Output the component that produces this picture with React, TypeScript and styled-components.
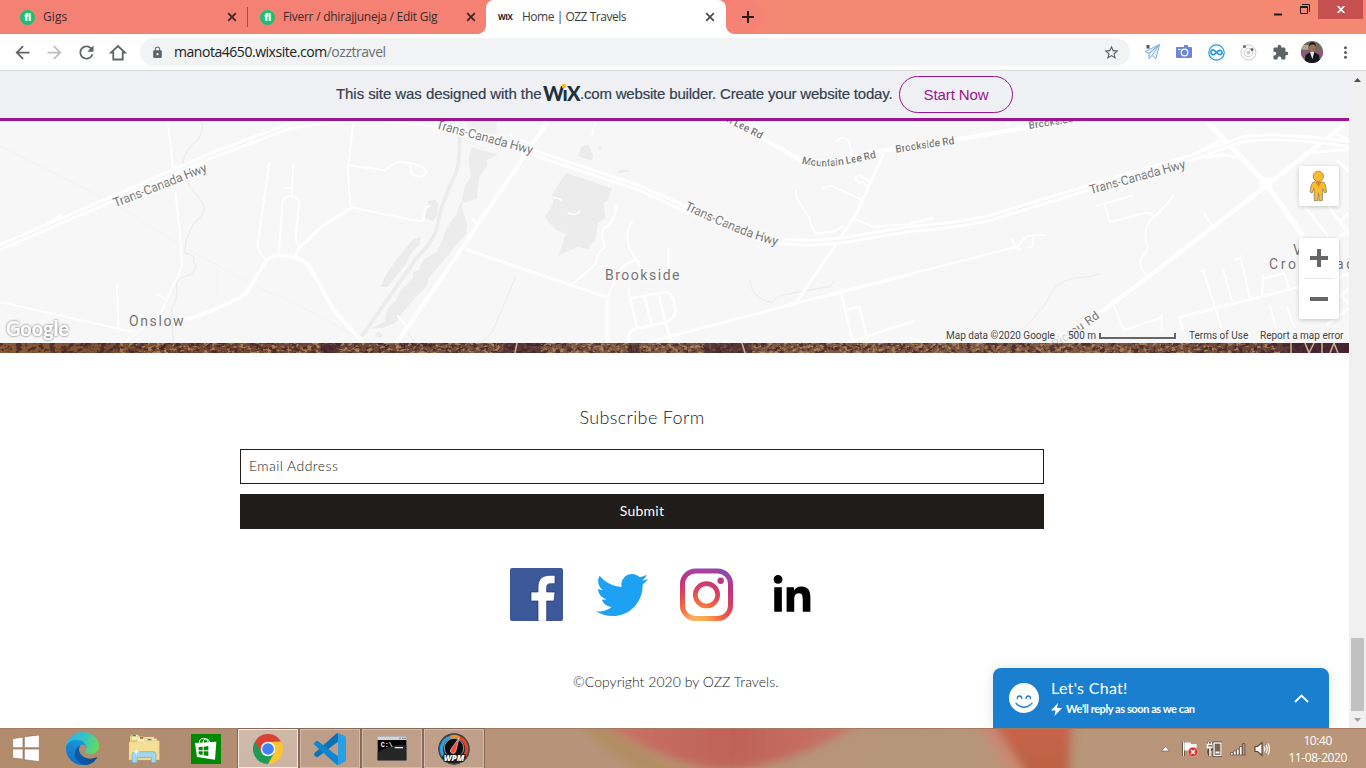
import React from 'react';
import styled, { createGlobalStyle } from 'styled-components';
import {
  MdArrowBack,
  MdArrowForward,
  MdRefresh,
  MdLock,
  MdStarBorder,
  MdExtension,
  MdMoreVert,
} from 'react-icons/md';
import { FaTwitter, FaLinkedinIn } from 'react-icons/fa';

const GlobalStyle = createGlobalStyle`
  * { box-sizing: border-box; }
  body { margin: 0; overflow: hidden; background: #fff; }
  svg { display: block; flex: none; }
`;

const UI_FONT = `'Open Sans', 'Noto Sans', sans-serif`;
const SITE_FONT = `Lato, 'Open Sans', sans-serif`;

const Screen = styled.div`
  width: 1366px;
  height: 768px;
  display: flex;
  flex-direction: column;
  overflow: hidden;
  font-family: ${UI_FONT};
`;

/* ---------- Tab strip ---------- */

const TabStrip = styled.header`
  display: flex;
  height: 34px;
  flex: none;
  padding-left: 8px;
  background: linear-gradient(90deg, #f58174 0, #f58274 740px, #f48873 780px, #f48873 100%);
`;

const Tab = styled.div<{ $width: number; $active?: boolean }>`
  position: relative;
  display: flex;
  align-items: center;
  width: ${(p) => p.$width}px;
  height: 34px;
  padding: 0 ${(p) => (p.$active ? 11 : 10)}px 0 12px;
  border-radius: 8px 8px 0 0;
  background: ${(p) => (p.$active ? '#fff' : 'transparent')};
  color: ${(p) => (p.$active ? '#3c4043' : '#3b2a2b')};

  &::before,
  &::after {
    content: '';
    display: ${(p) => (p.$active ? 'block' : 'none')};
    position: absolute;
    bottom: 0;
    width: 8px;
    height: 8px;
  }
  &::before {
    left: -8px;
    background: radial-gradient(circle at 0 0, transparent 7.5px, #fff 8px);
  }
  &::after {
    right: -8px;
    background: radial-gradient(circle at 100% 0, transparent 7.5px, #fff 8px);
  }
`;

const TabTitle = styled.span<{ $spacing?: number }>`
  flex: 1;
  margin-left: 8px;
  font-size: 12px;
  line-height: 16px;
  letter-spacing: ${(p) => p.$spacing ?? 0}px;
  white-space: nowrap;
`;

const TabDivider = styled.div`
  width: 1px;
  height: 20px;
  margin: 7px 0 0;
  background: #9b4f4a;
`;

const FiverrBadge = styled.span`
  width: 15px;
  height: 15px;
  border-radius: 50%;
  background: #1dbf73;
  color: #fff;
  font: 800 10px/14px 'Open Sans', sans-serif;
  letter-spacing: -0.4px;
  text-align: center;
`;

const WixBadge = styled.span`
  width: 16px;
  color: #222;
  font: 700 8px/14px 'Open Sans', sans-serif;
  letter-spacing: -0.5px;
`;

const NewTab = styled.div`
  display: grid;
  place-items: center;
  width: 28px;
  height: 28px;
  margin: 3px 0 0 8px;
  border-radius: 50%;
  background: #f58274;
`;

const WindowControls = styled.div`
  display: flex;
  margin-left: auto;
  margin-right: 3px;
  height: 19px;
`;

const ControlButton = styled.div<{ $width: number; $danger?: boolean }>`
  display: grid;
  place-items: center;
  width: ${(p) => p.$width}px;
  background: ${(p) => (p.$danger ? '#c75050' : 'transparent')};
`;

/* ---------- Toolbar ---------- */

const Toolbar = styled.nav`
  display: flex;
  align-items: center;
  height: 37px;
  flex: none;
  padding: 0 4px 0 6px;
  border-bottom: 1px solid #d6d8db;
  background: #fff;
`;

const ToolIcon = styled.div<{ $color?: string; $width?: number }>`
  display: grid;
  place-items: center;
  width: ${(p) => p.$width ?? 32}px;
  flex: none;
  color: ${(p) => p.$color ?? '#5f6368'};
`;

const Omnibox = styled.div`
  display: flex;
  align-items: center;
  flex: 1;
  height: 28px;
  margin: 0 6px;
  padding: 0 10px 0 11px;
  border-radius: 14px;
  background: #f1f3f4;
  color: #5f6368;
`;

const Url = styled.span`
  flex: 1;
  margin-left: 10px;
  font-size: 14px;
  line-height: 20px;
  letter-spacing: -0.46px;
  color: #6b6f74;
  b {
    font-weight: 400;
    color: #202124;
  }
`;

/* ---------- Page ---------- */

const Viewport = styled.div`
  display: flex;
  height: 657px;
  flex: none;
`;

const Page = styled.main`
  position: relative;
  display: flex;
  flex-direction: column;
  width: 1349px;
  height: 657px;
  overflow: hidden;
  background: #fff;
`;

const WixBanner = styled.div`
  display: flex;
  align-items: center;
  height: 50px;
  flex: none;
  padding-left: 336px;
  border-bottom: 3px solid #9a148e;
  background: #eff0f3;
  color: #32414f;
  font: 400 15px/20px 'Liberation Sans', Arial, sans-serif;
  white-space: nowrap;
`;

const BannerText = styled.span<{ $width: number; $spacing: number }>`
  width: ${(p) => p.$width}px;
  padding-bottom: 2px;
  letter-spacing: ${(p) => p.$spacing}px;
  -webkit-text-stroke: 0.2px #32414f;
`;

const WixLogo = styled.span`
  position: relative;
  width: 37px;
  margin-bottom: 3px;
  color: #20303c;
  font: 900 20px/20px Lato, sans-serif;
  letter-spacing: -0.7px;
  &::after {
    content: '';
    position: absolute;
    left: 19px;
    top: 1px;
    width: 4px;
    height: 4px;
    border-radius: 1px;
    background: #fbbd15;
  }
`;

const StartButton = styled.button`
  width: 114px;
  height: 37px;
  margin-left: 7px;
  padding: 0;
  border: 1px solid #9a148e;
  border-radius: 19px;
  background: transparent;
  color: #9a148e;
  font: 400 15px/20px 'Liberation Sans', Arial, sans-serif;
  letter-spacing: -0.1px;
`;

const MapPanel = styled.section`
  position: relative;
  height: 222px;
  flex: none;
  background: #f7f7f7;
`;

const MapControl = styled.div<{ $top: number; $height: number }>`
  position: absolute;
  right: 10px;
  top: ${(p) => p.$top}px;
  display: flex;
  flex-direction: column;
  align-items: center;
  width: 40px;
  height: ${(p) => p.$height}px;
  border-radius: 2px;
  background: #fff;
  box-shadow: 0 1px 4px rgba(0, 0, 0, 0.2);
`;

const ZoomButton = styled.div`
  display: grid;
  place-items: center;
  width: 40px;
  height: 40px;
`;

const ZoomDivider = styled.div`
  width: 30px;
  height: 1px;
  background: #e6e6e6;
`;

const MapCredits = styled.div`
  position: absolute;
  right: 0;
  bottom: 0;
  display: flex;
  align-items: center;
  height: 14px;
  color: #444;
  font: 400 10px/14px Roboto, sans-serif;
  white-space: nowrap;
`;

const Credit = styled.span<{ $width: number; $spacing?: number }>`
  width: ${(p) => p.$width}px;
  padding-left: 6px;
  letter-spacing: ${(p) => p.$spacing ?? 0}px;
  background: rgba(247, 247, 247, 0.7);
`;

const ScaleBar = styled.i`
  display: block;
  width: 77px;
  height: 6px;
  margin-right: 7px;
  border: solid #666;
  border-width: 0 2px 2px;
`;

const PhotoStrip = styled.div`
  height: 10px;
  flex: none;
`;

const Footer = styled.footer`
  display: flex;
  flex-direction: column;
  font-family: ${SITE_FONT};
  color: #201c1a;
`;

const SubscribeForm = styled.form`
  display: flex;
  flex-direction: column;
  width: 804px;
  margin: 51px 0 0 240px;
`;

const FormTitle = styled.h2`
  margin: 0 0 19px;
  text-align: center;
  font-size: 18px;
  line-height: 26px;
  font-weight: 300;
  letter-spacing: 0.35px;
`;

const EmailField = styled.label`
  height: 35px;
  padding: 0 8px;
  border: 1px solid #201c1a;
  font-size: 14px;
  font-weight: 300;
  line-height: 31px;
  letter-spacing: 0.44px;
`;

const SubmitButton = styled.button`
  height: 35px;
  margin-top: 10px;
  padding: 0 0 2px;
  border: 0;
  background: #201c1a;
  color: #fff;
  font: 400 14px/33px ${SITE_FONT};
  letter-spacing: 0.25px;
`;

const SocialBar = styled.div`
  display: flex;
  gap: 32px;
  margin: 39px 0 0 510px;
`;

const SocialLink = styled.span<{ $color?: string; $drop?: number }>`
  display: grid;
  place-items: center;
  width: 53px;
  height: 53px;
  padding-top: ${(p) => p.$drop ?? 0}px;
  color: ${(p) => p.$color ?? '#000'};
`;

const Copyright = styled.p`
  margin: 51px 0 0 573px;
  font-size: 14px;
  line-height: 20px;
  font-weight: 300;
  letter-spacing: 0.03px;
`;

const ChatWidget = styled.aside`
  position: absolute;
  right: 20px;
  bottom: 0;
  display: flex;
  align-items: center;
  width: 336px;
  height: 60px;
  padding: 0 20px 0 16px;
  border-radius: 8px 8px 0 0;
  background: #1b7fd0;
  box-shadow: 0 0 12px rgba(0, 60, 60, 0.13);
  color: #fff;
  font-family: ${SITE_FONT};
`;

const ChatCopy = styled.div`
  display: flex;
  flex-direction: column;
  flex: 1;
  margin-left: 12px;
`;

const ChatTitle = styled.strong`
  font-size: 16px;
  line-height: 22px;
  font-weight: 400;
  letter-spacing: 0.3px;
`;

const ChatNote = styled.span`
  display: flex;
  align-items: center;
  gap: 4px;
  font-size: 11px;
  line-height: 20px;
  font-weight: 700;
  letter-spacing: -0.42px;
`;

const ScrollTrack = styled.div`
  display: flex;
  flex-direction: column;
  align-items: center;
  width: 17px;
  background: #f0f0f1;
`;

const ScrollArrow = styled.div`
  display: grid;
  place-items: center;
  width: 17px;
  height: 17px;
`;

const ScrollThumb = styled.div`
  width: 13px;
  height: 73px;
  margin-top: auto;
  background: #c1c1c1;
`;

/* ---------- Taskbar ---------- */

const Taskbar = styled.footer`
  position: relative;
  display: flex;
  height: 40px;
  flex: none;
  border-top: 1px solid #a5795f;
  background: linear-gradient(90deg, #b08c6c 0, #b18e75 300px, #b79379 480px, #b69678 900px, #ba9579 1366px);
`;

const Wallpaper = styled.svg`
  position: absolute;
  inset: 0;
`;

const TaskItem = styled.div<{ $state?: 'open' | 'active'; $width?: number }>`
  position: relative;
  display: grid;
  place-items: center;
  width: ${(p) => p.$width ?? 60}px;
  height: 39px;
  margin: 0 1px;
  border: ${(p) => (p.$state ? '1px solid' : '0 solid')};
  border-color: ${(p) => (p.$state === 'active' ? '#f3ebe4' : '#d3bbaa')};
  outline: ${(p) => (p.$state ? '1px solid #87695a' : 'none')};
  outline-offset: 0;
  background: ${(p) =>
    p.$state === 'active'
      ? 'linear-gradient(150deg, #d0bba9, #cbb3a4)'
      : p.$state === 'open'
        ? 'rgba(205, 178, 160, 0.45)'
        : 'transparent'};
`;

const Tray = styled.div`
  position: relative;
  display: flex;
  align-items: center;
  gap: 8px;
  margin-left: auto;
  padding-right: 19px;
`;

const TrayArrow = styled.svg`
  margin-right: 4px;
`;

const Clock = styled.div`
  margin-left: 10px;
  color: #fff;
  font-size: 12px;
  line-height: 17px;
  letter-spacing: -0.4px;
  text-align: center;
`;

/* ---------- Drawings ---------- */

const CloseGlyph = ({ color = '#3a2526' }: { color?: string }) => (
  <svg width="10" height="10" viewBox="0 0 10 10" stroke={color} strokeWidth="1.7">
    <path d="M1.2 1.2l7.6 7.6M8.8 1.2L1.2 8.8" />
  </svg>
);

const halo = { stroke: '#fbfbfb', strokeWidth: 9, paintOrder: 'stroke' as const, strokeLinejoin: 'round' as const };

const MapDrawing = () => (
  <svg width="1349" height="222" viewBox="0 121 1349 222" fontFamily="Roboto, sans-serif" fill="none">
    <defs>
      <filter id="logoShadow" x="-20%" y="-40%" width="140%" height="180%">
        <feDropShadow dx="0" dy="0" stdDeviation="1.1" floodColor="#555" floodOpacity="1" />
      </filter>
      <path id="hwyCurve" d="M684 274Q740 300 800 325Q880 362 985 389" />
      <path id="leeCurve" d="M1037 136Q1090 152 1160 140Q1210 132 1275 116" />
      <path id="hwyTop" d="M1306 31L1640 121" />
    </defs>

    {/* wooded areas */}
    <g transform="translate(0 118) scale(.33333)" fill="#ececec">
      <path d="M1285 248l22-3 8 12-4 35-12 18-26-10 10-36z" />
      <path d="M1240 362l22-4-4 20-28 32-14 30-40 50-14 18-20-2 14-32 34-50z" />
      <path d="M1390 236L1368 290 1340 330 1326 370 1310 402 1270 425 1256 455 1238 465 1240 480 1200 520 1190 545 1160 575 1155 610 1112 632 1150 630 1185 615 1215 575 1240 545 1280 505 1286 480 1320 440 1368 382 1398 348 1402 318 1386 272z" />
      <path d="M1136 640l14 14-10 8-14-10z" />
      <path d="M1085 655L1250 420Q1290 380 1310 335Q1320 260 1368 165Q1385 110 1376 20" fill="none" stroke="#ececec" strokeWidth="11" />
    </g>
    <g transform="translate(456 118) scale(.33333)" fill="#ececec">
      <path d="M34 10h88v36l-50 4-24-6-14-14z" opacity=".7" />
      <path d="M46 88l30 8 50 14-34 16 2 16-24 34-8 66-36 12-8-8 8-40 18-30-6-50z" />
      <path d="M330 165l138 46-12 35-13 8 5 46-22 16-8 52-16 12-4 14-32-8-58 26 22-66-30-10-34-38 26-40-4-28z" />
      <path d="M378 84l20-4 6 14 8 22-6 12-40-14zM424 86l16-2-8 16zM488 158l32-3-4 8-30 2z" />
    </g>

    {/* streams and boundaries */}
    <g transform="translate(0 118) scale(.33333)" stroke="#e8e8e8" strokeWidth="3">
      <path d="M600 10Q612 20 604 40Q600 65 580 76Q548 110 549 142Q556 170 568 205Q596 235 604 250Q622 265 604 295Q572 320 568 345Q552 375 554 405Q590 410 580 430Q596 450 572 470Q528 480 530 500Q534 550 514 570L520 670" />
      <path d="M0 84L340 255L555 390L760 500Q950 585 1080 664M652 450v80" stroke="#f0f0f0" strokeWidth="2" />
      <path d="M1225 645l20 30" />
    </g>
    <g transform="translate(456 118) scale(.33333)" stroke="#ebebeb" strokeWidth="3">
      <path d="M180 474L110 640Q95 660 75 672M883 484Q880 540 948 554Q962 534 975 532Q1045 518 1120 506L1133 490" />
    </g>
    <g transform="translate(910 118) scale(.33333)" stroke="#ebebeb" strokeWidth="3">
      <path d="M568 466Q550 478 500 479Q450 485 425 520Q400 580 336 634" />
    </g>

    {/* local roads */}
    <g transform="translate(0 118) scale(.33333)" stroke="#fff" strokeWidth="6" strokeLinejoin="round">
      <path d="M504 10L540 350L546 435Q540 470 520 500L480 590L370 676M471 529l25 13M350 500l6 132M0 552L398 642" />
      <path d="M808 132L774 370Q768 395 797 427M880 136L875 234M850 210h25M836 410L848 250Q850 236 872 234Q896 236 897 256L887 355Q888 375 898 388" />
      <path d="M1060 10L1043 160L1052 268L1256 310Q1270 308 1272 298L1276 272L1290 262M1046 142L1156 157Q1176 135 1200 132Q1280 138 1278 166Q1260 185 1236 168L1230 140" />
      <path d="M1052 272L970 322L900 388L885 412" strokeWidth="10" />
      <path d="M550 606Q620 590 725 535Q745 522 755 500L797 430Q815 412 840 412Q900 410 930 448L1000 575L1090 676" strokeWidth="11" />
      <path d="M0 380L130 326Q165 305 185 288" strokeWidth="7" />
      <path d="M1192 592l26 30" />
    </g>
    <g transform="translate(456 118) scale(.33333)" stroke="#fff" strokeWidth="6" strokeLinejoin="round">
      <path d="M275 10L-15 440L-180 676" strokeWidth="12" />
      <path d="M30 394L453 538V676" strokeWidth="9" />
      <path d="M480 264Q480 310 445 330Q430 350 448 385Q430 400 422 420L420 435Q400 460 352 495M530 307Q500 350 525 400Q545 425 556 448M638 390v60M455 536L475 490Q490 440 540 425M520 503v38M408 52l10-42M160 50l72 33M50 300l12 20" />
      <path d="M290 238q20 0 26 10M335 285q30 10 38-10" strokeWidth="4" />
      <path d="M522 541L630 522Q655 525 658 580Q655 605 625 614L530 635Q515 645 518 676M522 541L543 630M565 535L586 620M607 528L645 676" strokeWidth="8" />
      <path d="M560 676L1020 556L1154 522L1368 468" strokeWidth="9" />
      <path d="M1282 108L1205 280L1140 380L1015 560" strokeWidth="9" />
      <path d="M1154 522L1192 676M1172 574L1210 568L1235 664M1172 676L1290 635L1368 612" strokeWidth="8" />
      <path d="M1098 212L1125 203L1215 244M1020 214v22L1060 300Q1070 345 1085 346L1130 342L1160 326M1190 300l60 26L1368 318M1142 70Q1160 50 1180 70L1188 110M1240 190l-25-15q-22-2-14 14q8 8 20 2l20 30" />
      <path d="M900 50L1040 130" strokeWidth="13" />
      <path d="M1220 106L1368 86" strokeWidth="12" />
    </g>
    <g transform="translate(910 118) scale(.33333)" stroke="#fff" strokeWidth="6" strokeLinejoin="round">
      <path d="M130 66L365 26" strokeWidth="13" />
      <path d="M890 10L1070 198L1180 356" strokeWidth="16" />
      <path d="M1316 10L1060 210L710 480L560 592" strokeWidth="13" />
      <circle cx="1068" cy="196" r="16" fill="#fff" strokeWidth="9" />
      <path d="M0 468L322 386L346 358Q360 348 408 351M305 362l12 28l16 6M370 352v20q0 20-16 16" />
      <path d="M558 264L668 232M584 262L600 312L708 284Q725 284 732 296M790 232Q775 260 732 296Q700 320 708 370Q720 395 695 420Q680 440 712 474M880 284l28 42" />
      <path d="M612 566l30 70M645 636L755 598M755 590v50M990 410L1020 540M940 455L966 550M880 460L938 640M870 460l18-4M974 426l16-6M1060 470l-4 60M1118 450L1136 510M1060 482L1125 465M1080 560L1100 640M1130 566l24 62" />
      <path d="M820 640L808 598L1165 508L1316 470M1165 240L1255 356M1255 264L1318 350M1290 310l28-26M1280 125l38 36M1316 340L1280 362M1290 530L1318 560M1250 620L1318 570M1318 510l-24 22" strokeWidth="8" />
      <path d="M800 130L940 110L980 118M840 118L935 65M1180 106L1316 94M1270 44L1316 66M0 316l70-16M290 24l8-14" strokeWidth="9" />
      <path d="M0 612l15-5M0 660l50 16" />
    </g>

    {/* Trans-Canada Highway */}
    {[
      { w: 7.5, c: '#fff' },
      { w: 1.3, c: '#f3f3f3' },
    ].map((s) => (
      <path
        key={s.w}
        d="M-4 249L112 199L210 156L290 126Q360 112 436 124L534 153L640 188L690 211L760 238Q795 246 845 240L910 229Q960 225 990 218L1100 184L1190 158L1240 140Q1270 133 1349 144"
        stroke={s.c}
        strokeWidth={s.w}
      />
    ))}

    {/* road labels */}
    <g fill="#787878" fontSize="38">
      <g transform="translate(0 118) scale(.33333)">
        <text transform="translate(346 268) rotate(-21.5)" textLength="298" {...halo}>Trans-Canada Hwy</text>
        <text textLength="300" {...halo}><textPath href="#hwyTop">Trans-Canada Hwy</textPath></text>
      </g>
      <g transform="translate(456 118) scale(.33333)">
        <text textLength="300" {...halo}><textPath href="#hwyCurve">Trans-Canada Hwy</textPath></text>
        <g fontSize="31" fontWeight="500">
          <text textLength="228" {...halo}><textPath href="#leeCurve">Mountain Lee Rd</textPath></text>
          <text transform="translate(711 -40) rotate(27)" textLength="228" {...halo}>Mountain Lee Rd</text>
          <text transform="translate(1320 104) rotate(-8.6)" textLength="178" {...halo}>Brookside Rd</text>
        </g>
      </g>
      <g transform="translate(910 118) scale(.33333)">
        <text transform="translate(542 229) rotate(-15.5)" textLength="298" {...halo}>Trans-Canada Hwy</text>
        <text transform="translate(358 33) rotate(-9)" fontSize="31" fontWeight="500" textLength="178" {...halo}>Brookside Rd</text>
        <text transform="translate(436 692) rotate(-35)" fontSize="36" textLength="164" {...halo}>Pictou Rd</text>
      </g>
    </g>

    {/* place names */}
    <g fill="#757575" fontSize="14" stroke="#f9f9f9" strokeWidth="3" paintOrder="stroke">
      <text x="129" y="326" textLength="54.500">Onslow</text>
      <text x="605" y="280" textLength="74.500">Brookside</text>
      <text x="1293" y="255" textLength="46">Valley</text>
      <text x="1269" y="269" textLength="95">Crossroads</text>
    </g>

    <text x="6" y="335.500" fontFamily="Lato, sans-serif" fontWeight="700" fontSize="20" fill="#fff" textLength="63" lengthAdjust="spacingAndGlyphs" filter="url(#logoShadow)">
      Google
    </text>
  </svg>
);

const Pegman = () => (
  <svg width="40" height="40" viewBox="0 0 120 120">
    <g fill="#fbbc2c" stroke="#8b8371" strokeWidth="2.5" strokeLinejoin="round">
      <path d="M43 48h31l5 8 4 22-6 3-6-14-1 37H60.500l-2-22-2 22H46l-1-37-6 14-6-3 4-22z" />
      <circle cx="58" cy="31" r="15.5" />
    </g>
    <path d="M49 48h19l-9 15z" fill="#e2832c" />
  </svg>
);

const PhotoDrawing = () => (
  <svg width="1349" height="10">
    <defs>
      <linearGradient id="soil">
        <stop offset="0" stopColor="#8a5a35" />
        <stop offset=".18" stopColor="#6f4530" />
        <stop offset=".3" stopColor="#6d4a3a" />
        <stop offset=".42" stopColor="#7d5944" />
        <stop offset=".6" stopColor="#7b5642" />
        <stop offset=".8" stopColor="#805a43" />
        <stop offset=".93" stopColor="#684437" />
        <stop offset="1" stopColor="#4d2d38" />
      </linearGradient>
      <filter id="grain" x="0" y="0" width="100%" height="100%" colorInterpolationFilters="sRGB">
        <feTurbulence type="fractalNoise" baseFrequency="0.18 0.25" numOctaves="3" seed="4" />
        <feColorMatrix values="0 0 0 0 .23  0 0 0 0 .11  0 0 0 0 .14  6 0 0 0 -2.8" />
      </filter>
      <filter id="glint" x="0" y="0" width="100%" height="100%" colorInterpolationFilters="sRGB">
        <feTurbulence type="fractalNoise" baseFrequency="0.25 0.35" numOctaves="2" seed="11" />
        <feColorMatrix values="0 0 0 0 .76  0 0 0 0 .57  0 0 0 0 .4  0 6 0 0 -3.1" />
      </filter>
    </defs>
    <rect width="1349" height="10" fill="url(#soil)" />
    <rect width="1349" height="10" filter="url(#grain)" opacity=".7" />
    <rect x="120" width="1160" height="10" filter="url(#glint)" opacity=".75" />
    <path d="M62 10l12-10M106 10l14-10M132 10l12-10M322 0h18l-4 10h-14zM505 0h34v10h-34zM630 0h8v10h-8zM706 0h44v10h-44zM1290 0h59v10h-59z" fill="#43232f" stroke="#43232f" strokeWidth="3" opacity=".6" />
    <path d="M515 10l2-10M742 0l3 10M1291 0v10M1305 0l4 10 5-10M1322 0v10M1330 10l4-10 4 10" fill="none" stroke="#cfb09c" strokeWidth="1.5" />
  </svg>
);

const FacebookLogo = () => (
  <svg width="53" height="53" viewBox="0 0 159 159">
    <rect width="159" height="159" rx="6" fill="#3b5998" />
    <path d="M84 160V99H63V72h21V57c0-24 14-35 36-35h15v25h-13c-10 0-12 5-12 12v13h25l-3 27h-22v61z" fill="#fff" stroke="#1d2f7d" strokeWidth="2" />
  </svg>
);

const InstagramLogo = () => (
  <svg width="53" height="53" viewBox="0 0 53 53" fill="none">
    <defs>
      <radialGradient id="insta" cx=".34" cy="1.08" r="1.2">
        <stop offset="0" stopColor="#ffc266" />
        <stop offset=".16" stopColor="#fdA654" />
        <stop offset=".36" stopColor="#f36a3f" />
        <stop offset=".55" stopColor="#de4559" />
        <stop offset=".75" stopColor="#c2337f" />
        <stop offset=".86" stopColor="#a8409e" />
        <stop offset="1" stopColor="#7650b4" />
      </radialGradient>
      <mask id="instaMask">
        <rect x="2.5" y="3" width="48" height="47.5" rx="13" stroke="#fff" strokeWidth="5" />
        <circle cx="26.5" cy="26.8" r="11.2" stroke="#fff" strokeWidth="4.7" />
        <circle cx="40.7" cy="12.8" r="3.2" fill="#fff" />
      </mask>
    </defs>
    <rect width="53" height="53" fill="url(#insta)" mask="url(#instaMask)" />
  </svg>
);

const SmileIcon = () => (
  <svg width="30" height="30" viewBox="0 0 30 30" fill="none" stroke="#1b7fd0" strokeWidth="1.3" strokeLinecap="round">
    <circle cx="15" cy="15" r="15" fill="#fff" stroke="none" />
    <path d="M8.3 15.5q.3-2.5 2.3-2.5t2.3 2.5M17 15.5q.3-2.5 2.3-2.5t2.3 2.5M7 20.3q8 8 16 0" />
  </svg>
);

const EdgeLogo = () => (
  <svg width="33" height="33" viewBox="0 0 256 256">
    <defs>
      <linearGradient id="edgeA" x1=".2" x2="1" y1=".5" y2=".5"><stop stopColor="#0b5aa5" /><stop offset="1" stopColor="#124a8e" /></linearGradient>
      <linearGradient id="edgeB" x1=".7" x2=".3" y1="0" y2="1"><stop stopColor="#1b9de2" /><stop offset=".5" stopColor="#1583d2" /><stop offset="1" stopColor="#0d6fc5" /></linearGradient>
      <linearGradient id="edgeC" x1="0" x2="1" y1=".3" y2=".6"><stop stopColor="#2fb4e8" /><stop offset=".5" stopColor="#35c4c4" /><stop offset="1" stopColor="#66dc57" /></linearGradient>
    </defs>
    <path fill="url(#edgeA)" d="M235.7 195.5a93.7 93.7 0 0 1-10.6 4.7 101.9 101.9 0 0 1-35.9 6.4c-47.3 0-88.5-32.5-88.5-74.3a31.5 31.5 0 0 1 16.4-27.3c-42.8 1.8-53.8 46.4-53.8 72.5 0 74 68.1 81.4 82.8 81.4 7.9 0 19.8-2.3 27-4.6l1.3-.4a128.3 128.3 0 0 0 66.6-52.8 4 4 0 0 0-5.3-5.6z" />
    <path fill="url(#edgeB)" d="M105.7 241.4a79.2 79.2 0 0 1-22.7-21.3 80.7 80.7 0 0 1 29.5-120c3.2-1.5 8.5-4.1 15.6-4a32.4 32.4 0 0 1 25.7 13 31.9 31.9 0 0 1 6.3 18.7c0-.2 24.5-79.6-80-79.6-43.9 0-80 41.6-80 78.2a130.2 130.2 0 0 0 12.1 56 128 128 0 0 0 156.4 67.1 75.5 75.5 0 0 1-62.8-8z" />
    <path fill="url(#edgeC)" d="M152.3 148.9c-.9 1-3.4 2.5-3.4 5.6 0 2.6 1.7 5.2 4.8 7.3 14.3 10 41.4 8.6 41.5 8.6a59.6 59.6 0 0 0 30.3-8.3 61.4 61.4 0 0 0 30.4-52.9c.3-22.4-8-37.3-11.3-43.9C223.5 23.9 177.7 0 128 0A128 128 0 0 0 0 126.2c.5-36.5 36.8-66 80-66 3.5 0 23.5.3 42 10.1 16.3 8.6 24.9 18.9 30.8 29.2 6.2 10.7 7.3 24.2 7.3 29.5s-2.7 13.3-7.8 19.9z" />
  </svg>
);

const ExplorerLogo = () => (
  <svg width="32" height="31" viewBox="0 0 96 93">
    <path d="M6 10h22l5 7h46v60H6z" fill="#e9cf7a" />
    <path d="M10 5h20l4 7h44v10H10z" fill="#f7ebc0" stroke="#cfae57" />
    <rect x="13" y="5" width="11" height="5" fill="#2eaf3c" />
    <path d="M27 11h20l4 6h36v14H27z" fill="#f9efc9" stroke="#cfae57" />
    <rect x="36" y="12" width="10" height="5" fill="#d8492e" />
    <path d="M50 17h20l4 6h17v14H50z" fill="#fbf3d5" stroke="#cfae57" />
    <rect x="59" y="18" width="11" height="5" fill="#2c8be0" />
    <path d="M3 27h44l5-4h42v58H3z" fill="#f5df96" stroke="#d9b85f" />
    <path d="M12 89V65q0-9 9-9h54q9 0 9 9v24H70V74H28v15z" fill="#a5d5ea" stroke="#6aa9cb" strokeWidth="2" />
    <path d="M25 44l2 10 9 2.500-9 2.500-2 10-2-10-9-2.500 9-2.500z" fill="#e9fbff" />
  </svg>
);

const StoreLogo = () => (
  <svg width="30" height="30" viewBox="0 0 90 90">
    <rect width="90" height="90" fill="#018a01" />
    <path d="M12 27l64-4-4 54-54-8z" fill="#fff" />
    <path d="M26 30q-4-16 12-17 10-1 14 12M36 28q0-18 14-12 6 3 6 10" fill="none" stroke="#fff" strokeWidth="3" />
    <path d="M23 39l12-1v11H23zM38 38l14-2v13H38zM23 52h12v11l-12-2zM38 52h14v14l-14-2z" fill="#018a01" />
  </svg>
);

const ChromeLogo = () => (
  <svg width="30" height="30" viewBox="0 0 90 90">
    <path d="M45 23h39q6 10 6 22A45 45 0 0 1 45 90L64 56z" fill="#fbc72f" />
    <path d="M6 22.500A45 45 0 0 0 45 90L64 56 45 45z" fill="#219b54" />
    <path d="M6 22.500A45 45 0 0 1 84 22.500L45 24 26 56z" fill="#d94335" />
    <circle cx="45" cy="45" r="22" fill="#f4f4f4" />
    <circle cx="45" cy="45" r="17.500" fill="#3f83ee" />
  </svg>
);

const CodeLogo = () => (
  <svg width="32" height="32" viewBox="0 0 100 100">
    <path fill="#0a72b8" d="M96.500 10.800 75.900.9a6 6 0 0 0-7.100 1.200L1.300 63.600a4 4 0 0 0 0 6l5.500 5a4 4 0 0 0 5.100.3L93.100 13.200c2.700-2 6.900 0 6.900 3.400v-.3a6 6 0 0 0-3.500-5.500z" />
    <path fill="#0f86d1" d="M96.500 89.200l-20.600 9.900a6 6 0 0 1-7.100-1.200L1.300 36.400a4 4 0 0 1 0-6l5.500-5a4 4 0 0 1 5.100-.3l81.200 61.700c2.700 2 6.900 0 6.900-3.400v.3a6 6 0 0 1-3.500 5.500z" />
    <path fill="#2a9fe8" d="M75.900 99.100a6 6 0 0 1-7.100-1.200c2.300 2.300 6.200.7 6.200-2.600V4.700c0-3.300-3.900-4.900-6.200-2.600a6 6 0 0 1 7.100-1.200l20.600 9.900a6 6 0 0 1 3.500 5.500v67.400a6 6 0 0 1-3.500 5.500z" />
  </svg>
);

const TerminalLogo = () => (
  <svg width="30" height="25" viewBox="0 0 90 75">
    <rect x="1" y="1" width="88" height="73" fill="#050505" stroke="#8f8f8f" strokeWidth="2" />
    <path d="M2 50Q50 20 88 28V73H2z" fill="#262626" />
    <rect x="1" y="1" width="88" height="11" fill="#d2d6da" />
    <path d="M67 5h4v4h-4zM75 5h4v4h-4zM82 5h4v4h-4z" fill="#70777e" />
    <text x="11" y="33" fill="#fff" fontFamily="Liberation Mono, monospace" fontWeight="700" fontSize="20">C:\</text>
    <path d="M53 35h25" stroke="#fff" strokeWidth="3.500" />
  </svg>
);

const SpeedLogo = () => (
  <svg width="32" height="32" viewBox="0 0 96 96" fill="none">
    <circle cx="48" cy="48" r="47" fill="#1c1c1e" />
    <circle cx="48" cy="48" r="45" stroke="#6b6b6b" strokeWidth="2" />
    <path d="M16 68A37 37 0 0 1 36 13" stroke="#2b9fe6" strokeWidth="10" />
    <path d="M36 13A37 37 0 0 1 66 15" stroke="#f08c26" strokeWidth="10" />
    <path d="M66 15A37 37 0 0 1 80 68" stroke="#e2432b" strokeWidth="10" />
    <circle cx="48" cy="45" r="29" fill="#0d0d0f" stroke="#d8dde0" strokeWidth="2" />
    <path d="M63 15L53 56a7.500 7.500 0 0 1-15-6z" fill="#f04a3e" stroke="#ffd9d2" strokeWidth="2" />
    <text x="48" y="83" textAnchor="middle" fill="#fff" stroke="#111" strokeWidth="5" paintOrder="stroke" fontFamily="Open Sans, sans-serif" fontStyle="italic" fontWeight="800" fontSize="24" textLength="62" lengthAdjust="spacingAndGlyphs">WPM</text>
  </svg>
);

export default function App() {
  return (
    <Screen>
      <GlobalStyle />
      <TabStrip>
        <Tab $width={239}>
          <FiverrBadge>fi</FiverrBadge>
          <TabTitle $spacing={0.1}>Gigs</TabTitle>
          <CloseGlyph />
        </Tab>
        <TabDivider />
        <Tab $width={238}>
          <FiverrBadge>fi</FiverrBadge>
          <TabTitle $spacing={-0.25}>Fiverr / dhirajjuneja / Edit Gig</TabTitle>
          <CloseGlyph />
        </Tab>
        <Tab $width={240} $active>
          <WixBadge>WIX</WixBadge>
          <TabTitle $spacing={-0.48}>Home | OZZ Travels</TabTitle>
          <CloseGlyph color="#45484c" />
        </Tab>
        <NewTab>
          <svg width="12" height="12" stroke="#2a1b1b" strokeWidth="2">
            <path d="M0 6h12M6 0v12" />
          </svg>
        </NewTab>
        <WindowControls>
          <ControlButton $width={26}>
            <svg width="8" height="14"><path d="M0 11.500h8" stroke="#1d1d1d" strokeWidth="2" /></svg>
          </ControlButton>
          <ControlButton $width={27}>
            <svg width="10" height="12" fill="none" stroke="#1d1d1d">
              <path d="M2 .5h7.500V8M.5 2.500h7v7h-7zM.5 3.500h7" />
            </svg>
          </ControlButton>
          <ControlButton $width={45} $danger>
            <svg width="8" height="7" stroke="#fff" strokeWidth="1.700"><path d="M.7 0l6.600 7M7.300 0L.7 7" /></svg>
          </ControlButton>
        </WindowControls>
      </TabStrip>

      <Toolbar>
        <ToolIcon><MdArrowBack size={21} /></ToolIcon>
        <ToolIcon $color="#bcbec1"><MdArrowForward size={21} /></ToolIcon>
        <ToolIcon><MdRefresh size={21} /></ToolIcon>
        <ToolIcon>
          <svg width="18" height="17" fill="none" stroke="#5f6368" strokeWidth="1.800">
            <path d="M2 8.700L9 2l7 6.700h-2.300V15.500H4.300V8.700z" />
          </svg>
        </ToolIcon>
        <Omnibox>
          <MdLock size={13} />
          <Url><b>manota4650.wixsite.com</b>/ozztravel</Url>
          <MdStarBorder size={17} />
        </Omnibox>
        <ToolIcon>
          <svg width="16" height="16" fill="none" stroke="#7fb2e0" strokeWidth="1">
            <path d="M15.500.5L1 7.500l4 2zM15.500.5L5 9.500V15l3-3.500 4 3zM15.500.5L8 11.500" fill="#e8f3fc" />
            <rect x="2.500" y="1" width="3" height="3.500" fill="#555" stroke="none" />
          </svg>
        </ToolIcon>
        <ToolIcon>
          <svg width="16" height="14" fill="#6c86db">
            <path d="M1 2h7V0h4v2h3q1 0 1 1v9q0 1-1 1H1q-1 0-1-1V3q0-1 1-1z" />
            <circle cx="8.500" cy="7.500" r="3.300" fill="none" stroke="#fff" strokeWidth="1.200" />
            <path d="M2 4.500h2.500" stroke="#fff" />
          </svg>
        </ToolIcon>
        <ToolIcon>
          <svg width="17" height="17" fill="none" stroke="#1d9be6">
            <circle cx="8.500" cy="8.500" r="7.700" strokeWidth="1.200" />
            <path d="M8.500 8.500q-4-4.500-5.500-1.200Q2.800 11 5.500 10.700q1.300-.2 3-2.200t3-2.200q2.700 0 2.500 2.800-1.500 3.300-5.500-.6z" strokeWidth="1.700" />
          </svg>
        </ToolIcon>
        <ToolIcon>
          <svg width="17" height="17" fill="none" stroke="#c9c9c9">
            <circle cx="8.500" cy="8.500" r="7.500" /><circle cx="8.500" cy="8.500" r="4.300" />
            <circle cx="8.500" cy="8.500" r="2" fill="#ccc" stroke="none" />
            <circle cx="4.500" cy="2.500" r="1.500" fill="#666" stroke="none" />
            <circle cx="12" cy="5.500" r="1.500" fill="#666" stroke="none" />
          </svg>
        </ToolIcon>
        <ToolIcon><MdExtension size={17} /></ToolIcon>
        <ToolIcon>
          <svg width="22" height="22" viewBox="0 0 66 66">
            <clipPath id="face"><circle cx="33" cy="33" r="33" /></clipPath>
            <g clipPath="url(#face)">
              <rect width="66" height="66" fill="#6f6a5c" />
              <path d="M0 28h26v20H0zM44 26h22v26H44z" fill="#8d5a75" />
              <path d="M4 12h18v14H4z" fill="#a9aa9a" />
              <path d="M10 66l4-24 14-9h12l14 9 4 24z" fill="#15161c" />
              <path d="M27 33l7 22 6-22z" fill="#e8e8ee" />
              <ellipse cx="34" cy="20" rx="9" ry="13" fill="#9c7058" />
              <path d="M24 17q0-13 10-13t11 13q-3-7-10-7t-11 7z" fill="#17120f" />
            </g>
          </svg>
        </ToolIcon>
        <ToolIcon $width={34}><MdMoreVert size={19} /></ToolIcon>
      </Toolbar>

      <Viewport>
        <Page>
          <WixBanner>
            <BannerText $width={207} $spacing={-0.07}>This site was designed with the</BannerText>
            <WixLogo>WıX</WixLogo>
            <BannerText $width={312} $spacing={-0.19}>.com website builder. Create your website today.</BannerText>
            <StartButton type="button">Start Now</StartButton>
          </WixBanner>

          <MapPanel>
            <MapDrawing />
            <MapControl $top={45} $height={40}><Pegman /></MapControl>
            <MapControl $top={117} $height={81}>
              <ZoomButton>
                <svg width="18" height="18" stroke="#666" strokeWidth="4"><path d="M0 9h18M9 0v18" /></svg>
              </ZoomButton>
              <ZoomDivider />
              <ZoomButton>
                <svg width="18" height="4" fill="#666"><rect width="18" height="4" /></svg>
              </ZoomButton>
            </MapControl>
            <MapCredits>
              <Credit $width={122}>Map data ©2020 Google</Credit>
              <Credit $width={37}>500 m</Credit>
              <ScaleBar />
              <Credit $width={71}>Terms of Use</Credit>
              <Credit $width={95}>Report a map error</Credit>
            </MapCredits>
          </MapPanel>

          <PhotoStrip><PhotoDrawing /></PhotoStrip>

          <Footer>
            <SubscribeForm>
              <FormTitle>Subscribe Form</FormTitle>
              <EmailField>Email Address</EmailField>
              <SubmitButton type="button">Submit</SubmitButton>
            </SubscribeForm>
            <SocialBar>
              <SocialLink><FacebookLogo /></SocialLink>
              <SocialLink $color="#1da1f2"><FaTwitter size={52} /></SocialLink>
              <SocialLink><InstagramLogo /></SocialLink>
              <SocialLink $drop={3}><FaLinkedinIn size={42} /></SocialLink>
            </SocialBar>
            <Copyright>©Copyright 2020 by OZZ Travels.</Copyright>
          </Footer>

          <ChatWidget>
            <SmileIcon />
            <ChatCopy>
              <ChatTitle>Let's Chat!</ChatTitle>
              <ChatNote>
                <svg width="11" height="13" viewBox="0 0 11 13" fill="#fff"><path d="M7 0L0 7.500h4.500L3.500 13 11 5H6z" /></svg>
                We’ll reply as soon as we can
              </ChatNote>
            </ChatCopy>
            <svg width="15" height="9" fill="none" stroke="#fff" strokeWidth="1.800"><path d="M1 8l6.500-6.500L14 8" /></svg>
          </ChatWidget>
        </Page>

        <ScrollTrack>
          <ScrollArrow><svg width="7" height="4" fill="#505050"><path d="M0 4l3.500-4L7 4z" /></svg></ScrollArrow>
          <ScrollThumb />
          <ScrollArrow><svg width="7" height="4" fill="#a0a0a0"><path d="M0 0l3.500 4L7 0z" /></svg></ScrollArrow>
        </ScrollTrack>
      </Viewport>

      <Taskbar>
        <Wallpaper width="1366" height="39">
          <defs>
            <filter id="soft" x="-10%" y="-60%" width="120%" height="220%"><feGaussianBlur stdDeviation="5" /></filter>
            <linearGradient id="petal"><stop stopColor="#cb7266" /><stop offset=".5" stopColor="#bf6257" /><stop offset="1" stopColor="#ca7569" /></linearGradient>
            <linearGradient id="bud" x1="0" x2="0" y1="0" y2="1"><stop stopColor="#cb6350" /><stop offset="1" stopColor="#b9623f" /></linearGradient>
          </defs>
          <g filter="url(#soft)">
            <path d="M575-10H600Q660 42 725 50h-60Q620 40 575-10z" fill="#b28d63" />
            <path d="M600-10H866Q790 40 725 40Q665 38 600-10z" fill="url(#petal)" />
            <path d="M974-10h40l30 60h-32z" fill="#c88a74" />
            <path d="M990-10h82l-4 60h-38z" fill="url(#bud)" />
          </g>
        </Wallpaper>
        <TaskItem $width={49}>
          <svg width="28" height="27" viewBox="0 0 84 81" fill="#fff" stroke="#8f7058" strokeWidth="2">
            <path d="M2 11l31-5v32H2zM37 5l45-5v38H37zM2 42h31v31L2 69zM37 42h45v38l-45-6z" />
          </svg>
        </TaskItem>
        <TaskItem><EdgeLogo /></TaskItem>
        <TaskItem><ExplorerLogo /></TaskItem>
        <TaskItem><StoreLogo /></TaskItem>
        <TaskItem $state="active"><ChromeLogo /></TaskItem>
        <TaskItem $state="open"><CodeLogo /></TaskItem>
        <TaskItem $state="open"><TerminalLogo /></TaskItem>
        <TaskItem $state="open"><SpeedLogo /></TaskItem>
        <Tray>
          <TrayArrow width="9" height="6"><path d="M.5 5L4.500.5l4 4.500z" fill="#fff" stroke="#6b5244" strokeWidth=".6" /></TrayArrow>
          <svg width="16" height="16">
            <path d="M1.500 1v14" stroke="#5d4639" strokeWidth="3" />
            <path d="M1.500 1v14M3 2h5l1 1.500h5V9H3z" fill="#fff" stroke="#fff" strokeWidth="1.200" />
            <circle cx="11" cy="11" r="4.800" fill="#d8302b" stroke="#f1b7b0" strokeWidth=".7" />
            <path d="M9 9l4 4M13 9l-4 4" stroke="#fff" strokeWidth="1.500" />
          </svg>
          <svg width="16" height="16" fill="none" stroke="#5d4639">
            <path d="M1.500 3.500h5v3q0 1.500-2.500 2t0 6.500M2.500 3V1M5.500 3V1" stroke="#5d4639" strokeWidth="3" />
            <path d="M1.500 3.500h5v3H1.500zM4 7v8M2.500 3V1M5.500 3V1" stroke="#fff" strokeWidth="1.500" />
            <rect x="8" y="2" width="7" height="12.500" stroke="#5d4639" strokeWidth="3" />
            <rect x="8" y="2" width="7" height="12.500" fill="#7d6352" stroke="#fff" strokeWidth="1.300" />
            <path d="M9.500 11.500h4" stroke="#fff" strokeWidth="2" />
          </svg>
          <svg width="16" height="16" fill="#fff" stroke="#5d4639" strokeWidth=".7">
            <path d="M.5 11.500h2.500V14H.5zM3.500 10H6v4H3.500zM6.500 8H9v6H6.500zM9.500 5.500H12V14H9.500z" />
            <path d="M12.500 2.500H15V14h-2.500z" fill="#a8968a" />
          </svg>
          <svg width="16" height="16" fill="none" stroke="#fff" strokeWidth="1.200">
            <path d="M1 5.500h2.500L8 1.500v13L3.500 10.500H1z" fill="#fff" stroke="#5d4639" />
            <path d="M10 5.500q1.500 2.500 0 5M12 4q2.500 4 0 8M14 2.500q3 5.500 0 11" />
          </svg>
          <Clock>10:40<br />11-08-2020</Clock>
        </Tray>
      </Taskbar>
    </Screen>
  );
}
